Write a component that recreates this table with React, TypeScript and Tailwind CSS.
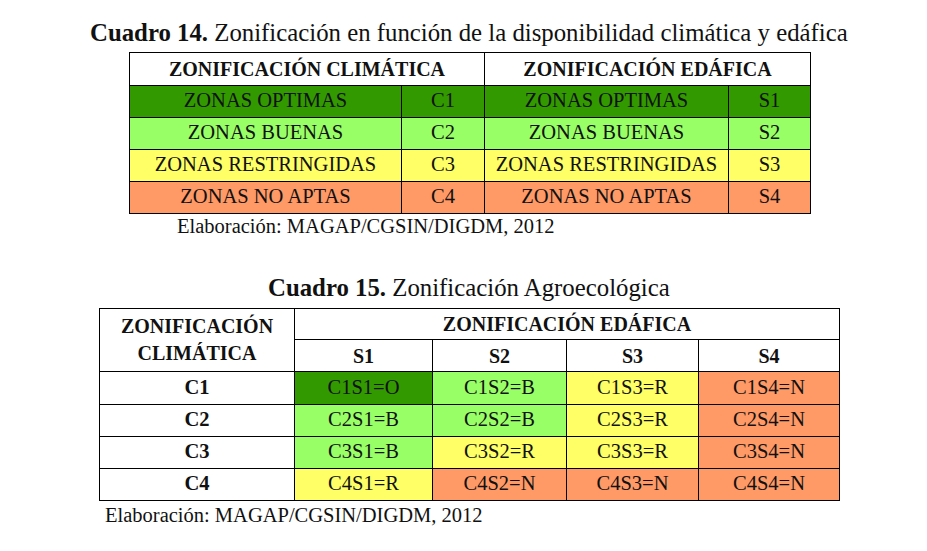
import React from "react";

const DG = "bg-[#339900]";
const LG = "bg-[#99ff66]";
const YE = "bg-[#ffff66]";
const SA = "bg-[#ff9966]";

const t1Rows: [string, string, string, string, string][] = [
  ["ZONAS OPTIMAS", "C1", "ZONAS OPTIMAS", "S1", DG],
  ["ZONAS BUENAS", "C2", "ZONAS BUENAS", "S2", LG],
  ["ZONAS RESTRINGIDAS", "C3", "ZONAS RESTRINGIDAS", "S3", YE],
  ["ZONAS NO APTAS", "C4", "ZONAS NO APTAS", "S4", SA],
];

const colorOf: Record<string, string> = { O: DG, B: LG, R: YE, N: SA };

const t2: string[][] = [
  ["O", "B", "R", "N"],
  ["B", "B", "R", "N"],
  ["B", "R", "R", "N"],
  ["R", "N", "N", "N"],
];

export default function App() {
  return (
    <div className="w-[927px] h-[551px] bg-white text-[#111] overflow-hidden font-['Liberation_Serif','Times_New_Roman',serif]">
      {/* Title 1 */}
      <div className="pt-[18px] h-[47px] pl-[90px] text-[24.8px] leading-[29px] whitespace-nowrap">
        <span className="font-bold">Cuadro 14.</span> Zonificación en función de la disponibilidad climática y edáfica
      </div>
      {/* Table 1 */}
      <div className="mt-[5px] ml-[129px] w-[682px] grid grid-cols-[271px_82px_243px_81px] grid-rows-[32px_31px_31px_31px_31px] gap-px p-px bg-black text-[20.5px]">
        <div className="col-span-2 bg-white flex items-center justify-center font-bold text-[20px]">
          ZONIFICACIÓN CLIMÁTICA
        </div>
        <div className="col-span-2 bg-white flex items-center justify-center font-bold text-[20px]">
          ZONIFICACIÓN EDÁFICA
        </div>
        {t1Rows.map((r) => (
          <React.Fragment key={r[1]}>
            <div className={`${r[4]} flex items-center justify-center whitespace-nowrap pb-[3px]`}>{r[0]}</div>
            <div className={`${r[4]} flex items-center justify-center pb-[3px]`}>{r[1]}</div>
            <div className={`${r[4]} flex items-center justify-center whitespace-nowrap pb-[3px]`}>{r[2]}</div>
            <div className={`${r[4]} flex items-center justify-center pb-[3px]`}>{r[3]}</div>
          </React.Fragment>
        ))}
      </div>
      <div className="ml-[177px] h-[24px] leading-[24px] text-[20.5px] whitespace-nowrap">
        Elaboración: MAGAP/CGSIN/DIGDM, 2012
      </div>
      {/* Title 2 */}
      <div className="mt-[35px] h-[29px] pl-[268px] text-[24.8px] leading-[29px] whitespace-nowrap">
        <span className="font-bold">Cuadro 15.</span> Zonificación Agroecológica
      </div>
      {/* Table 2 */}
      <div className="mt-[6px] ml-[99px] w-[741px] grid grid-cols-[194px_137px_133px_131px_140px] grid-rows-[30px_31px_32px_31px_31px_31px] gap-px p-px bg-black text-[20.5px]">
        <div className="row-span-2 bg-white flex flex-col items-center justify-center font-bold text-[20px] leading-[27px]">
          <span>ZONIFICACIÓN</span>
          <span>CLIMÁTICA</span>
        </div>
        <div className="col-span-4 bg-white flex items-center justify-center font-bold text-[20px]">
          ZONIFICACIÓN EDÁFICA
        </div>
        {["S1", "S2", "S3", "S4"].map((s) => (
          <div key={s} className="bg-white flex items-center justify-center font-bold text-[20px]">
            {s}
          </div>
        ))}
        {t2.map((row, i) => (
          <React.Fragment key={i}>
            <div className="bg-white flex items-center justify-center font-bold text-[20.5px] pb-[2px]">C{i + 1}</div>
            {row.map((v, j) => (
              <div key={j} className={`${colorOf[v]} flex items-center justify-center pb-[2px]`}>
                C{i + 1}S{j + 1}={v}
              </div>
            ))}
          </React.Fragment>
        ))}
      </div>
      <div className="mt-[2px] ml-[105px] h-[24px] leading-[24px] text-[20.5px] whitespace-nowrap">
        Elaboración: MAGAP/CGSIN/DIGDM, 2012
      </div>
    </div>
  );
}
